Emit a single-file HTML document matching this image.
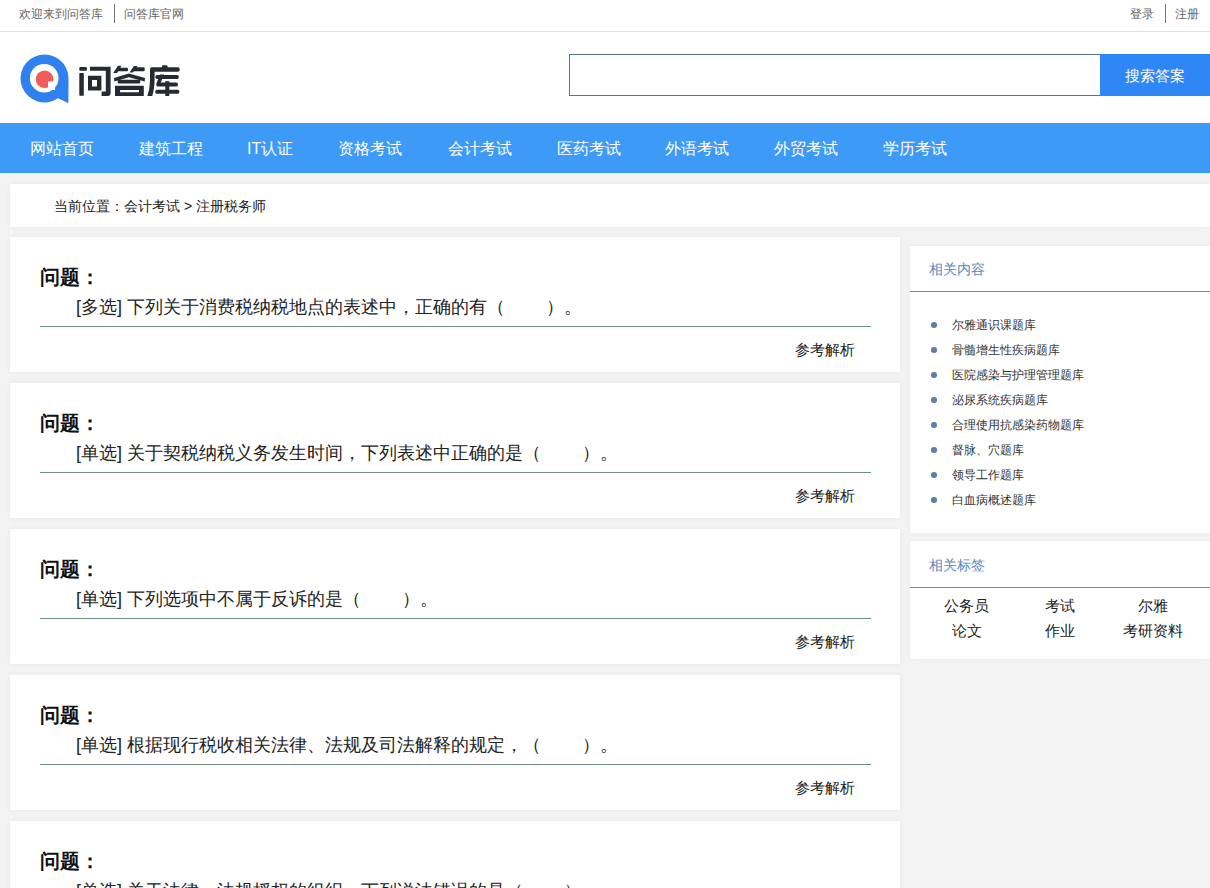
<!DOCTYPE html>
<html><head><meta charset="utf-8">
<style>
*{margin:0;padding:0;box-sizing:border-box}
html,body{width:1210px;height:888px;overflow:hidden}
body{background:#f3f3f3;font-family:"Liberation Sans",sans-serif;color:#333;position:relative}
.abs{position:absolute}
#top{left:0;top:0;width:1210px;height:32px;background:#fff;border-bottom:1px solid #e3e3e3}
#top span{position:absolute;font-size:12px;line-height:14px;color:#666;top:7px;white-space:nowrap}
.vsep{position:absolute;width:1px;background:#777;top:4px;height:19px}
#hdr{left:0;top:32px;width:1210px;height:91px;background:#fff}
#logo{left:20px;top:54px}
#logotxt{left:77px;top:59px;font-size:34px;line-height:40px;font-weight:900;color:#2b2e35;letter-spacing:0px;white-space:nowrap}
#sinput{left:569px;top:54px;width:532px;height:42px;border:1px solid #5a7488;background:#fff}
#sbtn{left:1100px;top:54px;width:110px;height:42px;background:#2f86f5;color:#fff;font-size:15px;line-height:44px;text-align:center}
#nav{left:0;top:123px;width:1210px;height:50px;background:#3e9af7}
#nav span{position:absolute;top:16px;font-size:16px;line-height:20px;color:#fff;white-space:nowrap}
.box{position:absolute;background:#fff;box-shadow:0 0 5px rgba(0,0,0,0.05)}
#crumb{left:10px;top:184px;width:1200px;height:43px}
#crumb span{position:absolute;left:44px;top:14px;font-size:14px;line-height:16px;color:#222;white-space:nowrap}
.card{left:10px;width:890px;height:135px}
.card .q{position:absolute;left:30px;top:28px;font-size:20px;line-height:24px;font-weight:bold;color:#111;white-space:nowrap}
.card .t{position:absolute;left:66px;top:59px;font-size:18px;line-height:22px;color:#222;white-space:nowrap}
.card .ln{position:absolute;left:30px;top:89px;width:831px;height:1px;background:#728c88}
.card .a{position:absolute;right:45px;top:104px;font-size:15px;line-height:18px;color:#222;white-space:nowrap}
#side1{left:910px;top:246px;width:300px;height:287px}
#side2{left:910px;top:541px;width:300px;height:118px}
.sh{position:absolute;left:19px;font-size:14px;line-height:16px;color:#5889bb;white-space:nowrap}
.sl{position:absolute;left:0;width:300px;height:1px;background:#768d88}
.li{position:absolute;left:42px;font-size:12px;line-height:14px;color:#333;white-space:nowrap}
.dot{position:absolute;left:21px;width:5.5px;height:5.5px;border-radius:50%;background:#5e7fa8}
.tag{position:absolute;width:93px;text-align:center;font-size:15px;line-height:18px;color:#222;white-space:nowrap}
</style></head><body>
<div id="top" class="abs">
  <span style="left:19px">欢迎来到问答库</span>
  <div class="vsep" style="left:114px"></div>
  <span style="left:124px">问答库官网</span>
  <span style="left:1130px">登录</span>
  <div class="vsep" style="left:1165px"></div>
  <span style="left:1175px">注册</span>
</div>
<div id="hdr" class="abs"></div>
<svg id="logo" class="abs" width="60" height="70" viewBox="0 0 60 70" style="left:20px;top:40px">
  <g transform="translate(-20,-40)">
  <path d="M68.5 78.3 A24 24 0 1 0 58 98.3 L68.4 103.2 L68.5 78.3 Z" fill="#2f80f0"/>
  <circle cx="44.2" cy="78.2" r="14.3" fill="#fff"/>
  <circle cx="44.6" cy="79.3" r="8.8" fill="#f35a5a"/>
  <path d="M48 81.4 H55 V90 H48 Z" fill="#fff"/>
  </g>
</svg>
<svg id="logotxt" class="abs" width="115" height="45" viewBox="0 0 115 45" style="left:75px;top:60px">
 <g fill="#262b33">
  <!-- 问 -->
  <rect x="4.3" y="7" width="7.6" height="3.8" rx="1"/>
  <rect x="4.3" y="13" width="4.5" height="22.8" rx="0.8"/>
  <path d="M15 6.8 H35.6 V33 Q35.6 36 32.6 36 H26.6 V31.6 H30.8 V10.8 H15 Z"/>
  <path fill-rule="evenodd" d="M13 15.8 H26.4 V30.6 H13 Z M17 20.1 V26.6 H22 V20.1 Z"/>
  <!-- 答 -->
  <path d="M38.2 13 L43 5.8 L46.5 5.8 L42 13 Z"/>
  <rect x="42.7" y="7.7" width="10.3" height="3.6" rx="1"/>
  <path d="M54.5 12.5 L59 6 L62.5 6 L58 12.5 Z"/>
  <rect x="58.4" y="7.2" width="11.3" height="4" rx="1.2"/>
  <path d="M53.9 13.4 L70 18 L69.7 21.4 L53.9 17.2 L39.3 21.4 L39 18 Z"/>
  <rect x="42.7" y="19.8" width="22.5" height="3.6" rx="0.8"/>
  <path fill-rule="evenodd" d="M40 25.7 H68.8 V36 H40 Z M45.1 29.9 V32.2 H64 V29.9 Z"/>
  <!-- 库 -->
  <rect x="87" y="5.2" width="5.5" height="3" rx="1"/>
  <rect x="75" y="7.2" width="29.7" height="4.5" rx="1.8"/>
  <path d="M75 9 H79.6 V20 Q79.3 30 77.2 36 H72.3 Q75 29 75 20 Z"/>
  <rect x="80.4" y="14.9" width="23.4" height="4" rx="1.6"/>
  <path d="M85 14.4 L89 14.4 L85.6 23 L81.6 23 Z"/>
  <rect x="81.3" y="22.5" width="21.6" height="4.1" rx="1.6"/>
  <rect x="80.4" y="29.7" width="23.8" height="4.1" rx="1.6"/>
  <rect x="90.3" y="21.2" width="4" height="14.8"/>
 </g>
</svg>
<div id="sinput" class="abs"></div>
<div id="sbtn" class="abs">搜索答案</div>
<div id="nav" class="abs">
  <span style="left:30px">网站首页</span>
  <span style="left:139px">建筑工程</span>
  <span style="left:247px">IT认证</span>
  <span style="left:338px">资格考试</span>
  <span style="left:448px">会计考试</span>
  <span style="left:557px">医药考试</span>
  <span style="left:665px">外语考试</span>
  <span style="left:774px">外贸考试</span>
  <span style="left:883px">学历考试</span>
</div>
<div id="crumb" class="box"><span>当前位置：会计考试 &gt; 注册税务师</span></div>

<div class="box card" style="top:237px">
  <div class="q">问题：</div>
  <div class="t">[多选] 下列关于消费税纳税地点的表述中，正确的有（　　 ）。</div>
  <div class="ln"></div>
  <div class="a">参考解析</div>
</div>
<div class="box card" style="top:383px">
  <div class="q">问题：</div>
  <div class="t">[单选] 关于契税纳税义务发生时间，下列表述中正确的是（　　 ）。</div>
  <div class="ln"></div>
  <div class="a">参考解析</div>
</div>
<div class="box card" style="top:529px">
  <div class="q">问题：</div>
  <div class="t">[单选] 下列选项中不属于反诉的是（　　 ）。</div>
  <div class="ln"></div>
  <div class="a">参考解析</div>
</div>
<div class="box card" style="top:675px">
  <div class="q">问题：</div>
  <div class="t">[单选] 根据现行税收相关法律、法规及司法解释的规定，（　　 ）。</div>
  <div class="ln"></div>
  <div class="a">参考解析</div>
</div>
<div class="box card" style="top:821px">
  <div class="q">问题：</div>
  <div class="t">[单选] 关于法律、法规授权的组织，下列说法错误的是（　　 ）。</div>
  <div class="ln"></div>
  <div class="a">参考解析</div>
</div>

<div id="side1" class="box">
  <div class="sh" style="top:15px">相关内容</div>
  <div class="sl" style="top:45px"></div>
  <div class="dot" style="top:76px"></div><div class="li" style="top:72px">尔雅通识课题库</div>
  <div class="dot" style="top:101px"></div><div class="li" style="top:97px">骨髓增生性疾病题库</div>
  <div class="dot" style="top:126px"></div><div class="li" style="top:122px">医院感染与护理管理题库</div>
  <div class="dot" style="top:151px"></div><div class="li" style="top:147px">泌尿系统疾病题库</div>
  <div class="dot" style="top:176px"></div><div class="li" style="top:172px">合理使用抗感染药物题库</div>
  <div class="dot" style="top:201px"></div><div class="li" style="top:197px">督脉、穴题库</div>
  <div class="dot" style="top:226px"></div><div class="li" style="top:222px">领导工作题库</div>
  <div class="dot" style="top:251px"></div><div class="li" style="top:247px">白血病概述题库</div>
</div>
<div id="side2" class="box">
  <div class="sh" style="top:16px">相关标签</div>
  <div class="sl" style="top:46px"></div>
  <div class="tag" style="left:10px;top:56px">公务员</div>
  <div class="tag" style="left:103px;top:56px">考试</div>
  <div class="tag" style="left:196px;top:56px">尔雅</div>
  <div class="tag" style="left:10px;top:81px">论文</div>
  <div class="tag" style="left:103px;top:81px">作业</div>
  <div class="tag" style="left:196px;top:81px">考研资料</div>
</div>
</body></html>
